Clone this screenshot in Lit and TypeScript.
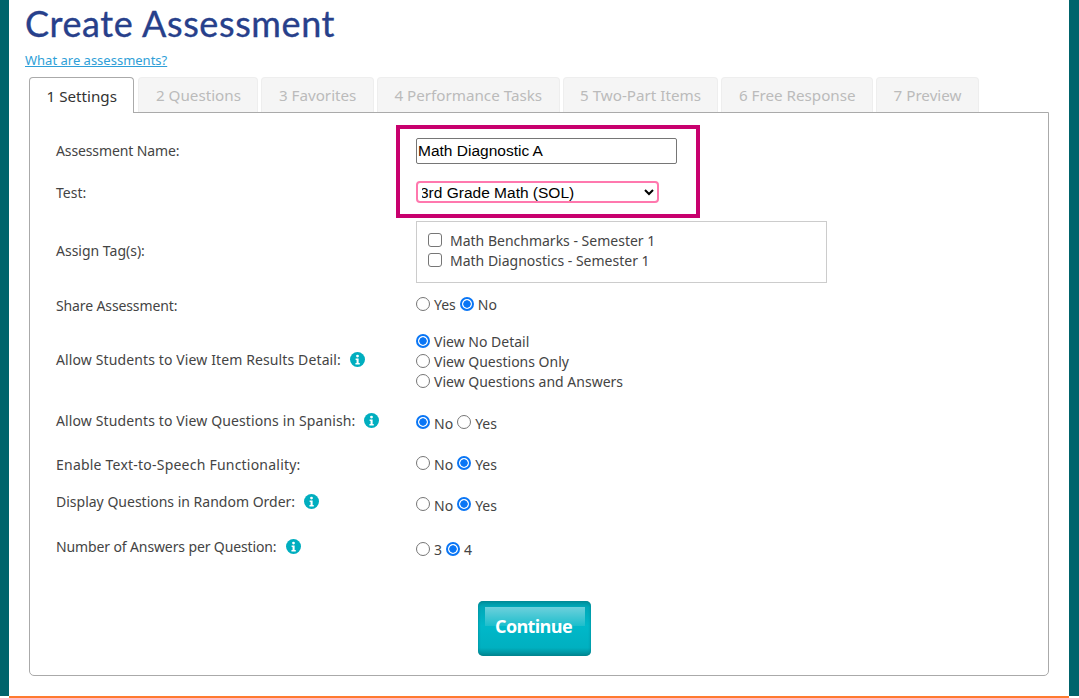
import { LitElement, html, css } from "lit";
import { customElement } from "lit/decorators.js";

const tabs = ["2 Questions", "3 Favorites", "4 Performance Tasks", "5 Two-Part Items", "6 Free Response", "7 Preview"];

@customElement("app-root")
export class AppRoot extends LitElement {
  static styles = css`
    :host { display: block; width: 1079px; height: 698px; overflow: hidden; background: #fff; font-family: "Noto Sans", sans-serif; font-size: 14px; color: #444; }
    .frame { height: 696px; border-left: 9px solid #00646c; border-right: 10px solid #00646c; box-sizing: border-box; padding: 0 20px; }
    .orange { height: 2px; background: #ff7a2f; margin: 0 10px 0 9px; }
    h1 { margin: 0 0 0 -4px; font: 400 36px/46px Lato, sans-serif; color: #27408b; letter-spacing: .6px; -webkit-text-stroke: .35px #27408b; }
    .help { display: block; margin: 6px 0 0 -4px; font-size: 13px; line-height: 16px; color: #2f9fd8; text-decoration: underline; }
    .tabs { display: flex; gap: 3px; margin-top: 9px; height: 36px; position: relative; z-index: 1; font-size: 15.2px; }
    .tab { box-sizing: border-box; height: 35px; padding: 0 16.5px; border: 1px solid #eee; border-bottom: 0; border-radius: 4px 4px 0 0; background: #f5f5f5; color: #bbb; display: flex; align-items: center; }
    .tab.active { height: 36px; background: #fff; border: 1px solid #aaa; border-bottom: 0; color: #333; margin-right: 1px; }
    .panel { box-sizing: border-box; height: 564px; margin-top: -1px; border: 1px solid #aaa; border-radius: 0 0 5px 5px; padding: 17px 26px 0; position: relative; }
    .row { display: grid; grid-template-columns: 360px 1fr; align-items: center; }
    .label { display: flex; align-items: center; gap: 9px; }
    .wide { letter-spacing: .12px; }
    .wider { letter-spacing: .22px; }
    .tight { letter-spacing: -.12px; }
    .up2 { padding-bottom: 4px; }
    .up3 { padding-bottom: 6px; }
    .up4 { padding-bottom: 8px; }
    .h40 { height: 40px; }
    .h41 { height: 41px; }
    .h42 { height: 42px; }
    .h44 { height: 44px; }
    .h70 { height: 70px; }
    .mt4 { margin-top: 4px; }
    .mt6 { margin-top: 6px; }
    .tagrow { margin-top: 8px; height: 62px; }
    .tagbox { box-sizing: border-box; width: 411px; height: 62px; border: 1px solid #ccc; padding: 9px 11px; display: flex; flex-direction: column; line-height: 20px; }
    .tagbox .opt { gap: 8px; }
    .stack { display: flex; flex-direction: column; line-height: 20px; }
    .opt { display: inline-flex; align-items: center; gap: 4px; margin-right: 4px; }
    input[type="text"] { box-sizing: border-box; width: 261px; height: 26px; border: 1px solid #767676; border-radius: 2px; padding: 0 1px; font: 15.5px "Liberation Sans", sans-serif; color: #000; outline: none; }
    select { box-sizing: border-box; width: 243px; height: 22px; border: 2px solid #ff78ae; border-radius: 4px; padding: 0; text-indent: -2px; font: 15.5px "Liberation Sans", sans-serif; color: #000; background: #fff; }
    .radio, .check { appearance: none; -webkit-appearance: none; margin: 0 0 2px; box-sizing: border-box; width: 14px; height: 14px; background: #fff; border: 1px solid #767676; }
    .radio { border-radius: 50%; }
    .radio:checked { border: 2px solid #0a76f5; background: radial-gradient(circle, #0a76f5 0 3.4px, #fff 4px); }
    .check { border-radius: 3px; }
    .info { width: 15px; height: 15px; flex: none; }
    .actions { display: flex; justify-content: center; margin-top: 31px; padding-right: 9px; }
    .btn { box-sizing: border-box; width: 113px; height: 55px; border: 0; border-radius: 5px; padding: 0 2px 6px 0; color: #fff; font: 700 18px "Open Sans", sans-serif; letter-spacing: -.65px; position: relative; background: linear-gradient(#00909d 0, #00a8b8 6px, #00b8c9 45%, #00b0c0 85%, #008791 100%); box-shadow: inset 0 0 3px #007f8a; }
    .btn::before { content: ""; position: absolute; top: 6px; left: 7px; right: 6px; height: 19px; background: linear-gradient(#6dd0dc, #1cbecc); }
    .btn span { position: relative; }
    .callout { position: absolute; left: 366px; top: 12px; width: 304px; height: 93px; box-sizing: border-box; border: 4px solid #c8006e; pointer-events: none; }
  `;

  private info() {
    return html`<svg class="info" viewBox="0 0 16 16" aria-hidden="true"><circle cx="8" cy="8" r="8" fill="#00aebf"/><circle cx="8" cy="4.3" r="1.5" fill="#fff"/><path d="M6 6.8h3.2v5H10.4v1.6H5.8v-1.6h1.2V8.4H6z" fill="#fff"/></svg>`;
  }

  private opt(name: string, label: string, checked = false) {
    return html`<label class="opt"><input class="radio" type="radio" name=${name} ?checked=${checked} />${label}</label>`;
  }

  render() {
    return html`
      <div class="frame">
        <h1>Create Assessment</h1>
        <a class="help">What are assessments?</a>
        <div class="tabs">
          <div class="tab active">1 Settings</div>
          ${tabs.map((t) => html`<div class="tab">${t}</div>`)}
        </div>
        <div class="panel">
          <div class="row h41"><div class="label tight">Assessment Name:</div><div><input type="text" value="Math Diagnostic A" /></div></div>
          <div class="row h42"><div class="label">Test:</div><div><select><option>3rd Grade Math (SOL)</option></select></div></div>
          <div class="row tagrow"><div class="label up2">Assign Tag(s):</div>
            <div class="tagbox">
              <label class="opt"><input class="check" type="checkbox" />Math Benchmarks - Semester 1</label>
              <label class="opt"><input class="check" type="checkbox" />Math Diagnostics - Semester 1</label>
            </div>
          </div>
          <div class="row h44"><div class="label tight">Share Assessment:</div><div>${this.opt("share", "Yes")}${this.opt("share", "No", true)}</div></div>
          <div class="row h70"><div class="label up3 wide">Allow Students to View Item Results Detail: ${this.info()}</div>
            <div class="stack">${this.opt("detail", "View No Detail", true)}${this.opt("detail", "View Questions Only")}${this.opt("detail", "View Questions and Answers")}</div></div>
          <div class="row h41 mt6"><div class="label up3 wide">Allow Students to View Questions in Spanish: ${this.info()}</div><div>${this.opt("sp", "No", true)}${this.opt("sp", "Yes")}</div></div>
          <div class="row h41"><div class="label wider">Enable Text-to-Speech Functionality:</div><div>${this.opt("tts", "No")}${this.opt("tts", "Yes", true)}</div></div>
          <div class="row h41"><div class="label up4">Display Questions in Random Order: ${this.info()}</div><div>${this.opt("rand", "No")}${this.opt("rand", "Yes", true)}</div></div>
          <div class="row h40 mt4"><div class="label up4 tight">Number of Answers per Question: ${this.info()}</div><div>${this.opt("num", "3")}${this.opt("num", "4", true)}</div></div>
          <div class="actions"><button class="btn"><span>Continue</span></button></div>
          <div class="callout"></div>
        </div>
      </div>
      <div class="orange"></div>
    `;
  }
}
